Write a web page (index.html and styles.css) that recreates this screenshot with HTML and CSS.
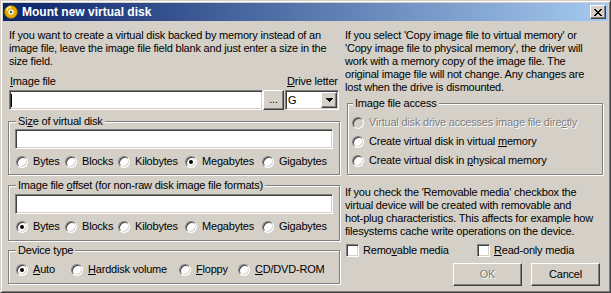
FILE: index.html
```html
<!DOCTYPE html>
<html lang="en">
<head>
<meta charset="utf-8">
<title>Mount new virtual disk</title>
<link rel="stylesheet" href="styles.css">
</head>
<body>
<div class="window">
  <div class="titlebar">
    <svg class="title-icon" viewBox="0 0 16 16" width="16" height="16">
      <circle cx="8" cy="8" r="6.5" fill="#E2AE00" stroke="#7A5C00" stroke-width="1"/>
      <path d="M3.5 6.5 A5 5 0 0 1 8 3" stroke="#FFF2A8" stroke-width="1.6" fill="none"/>
      <circle cx="8" cy="8" r="2.6" fill="#fff"/>
      <circle cx="8" cy="8" r="1.2" fill="#4A4A4A"/>
    </svg>
    <span class="title-text">Mount new virtual disk</span>
    <span class="close-btn">
      <svg viewBox="0 0 8 7" width="8" height="7" shape-rendering="crispEdges">
        <path d="M0 0h2v1H0z M6 0h2v1H6z M1 1h2v1H1z M5 1h2v1H5z M2 2h4v1H2z M3 3h2v1H3z M2 4h4v1H2z M1 5h2v1H1z M5 5h2v1H5z M0 6h2v1H0z M6 6h2v1H6z" fill="#000"/>
      </svg>
    </span>
  </div>

  <div class="dialog">
    <div class="col-left">
      <p class="note note-left">If you want to create a virtual disk backed by memory instead of an<br>image file, leave the image file field blank and just enter a size in the<br>size field.</p>

      <div class="file-labels">
        <span class="file-label"><u>I</u>mage file</span>
        <span class="drive-label"><u>D</u>rive letter</span>
      </div>
      <div class="file-row">
        <span class="edit edit-file"><span class="caret"></span></span>
        <span class="button btn-browse">...</span>
        <span class="combo">
          <span class="combo-value">G</span>
          <span class="button combo-arrow">
            <svg viewBox="0 0 7 4" width="7" height="4" shape-rendering="crispEdges"><path d="M0 0h7v1H0z M1 1h5v1H1z M2 2h3v1H2z M3 3h1v1H3z" fill="#000"/></svg>
          </span>
        </span>
      </div>

      <div class="group group-size">
        <div class="group-title">Si<u>z</u>e of virtual disk</div>
        <div class="edit"></div>
        <div class="choices choices-units">
          <span class="option"><span class="radio"></span>Bytes</span>
          <span class="option"><span class="radio"></span>Blocks</span>
          <span class="option"><span class="radio"></span>Kilobytes</span>
          <span class="option"><span class="radio checked"></span>Megabytes</span>
          <span class="option"><span class="radio"></span>Gigabytes</span>
        </div>
      </div>

      <div class="group group-offset">
        <div class="group-title">Image file <u>o</u>ffset (for non-raw disk image file formats)</div>
        <div class="edit"></div>
        <div class="choices choices-units">
          <span class="option"><span class="radio checked"></span>Bytes</span>
          <span class="option"><span class="radio"></span>Blocks</span>
          <span class="option"><span class="radio"></span>Kilobytes</span>
          <span class="option"><span class="radio"></span>Megabytes</span>
          <span class="option"><span class="radio"></span>Gigabytes</span>
        </div>
      </div>

      <div class="group group-device">
        <div class="group-title">Device type</div>
        <div class="choices choices-device">
          <span class="option"><span class="radio checked"></span><span><u>A</u>uto</span></span>
          <span class="option"><span class="radio"></span><span><u>H</u>arddisk volume</span></span>
          <span class="option"><span class="radio"></span><span><u>F</u>loppy</span></span>
          <span class="option"><span class="radio"></span><span><u>C</u>D/DVD-ROM</span></span>
        </div>
      </div>
    </div>

    <div class="col-right">
      <p class="note">If you select 'Copy image file to virtual memory' or<br>'Copy image file to physical memory', the driver will<br>work with a memory copy of the image file. The<br>original image file will not change. Any changes are<br>lost when the drive is dismounted.</p>

      <div class="group group-access">
        <div class="group-title">Image file access</div>
        <div class="option access-option disabled"><span class="radio"></span><span>Virtual disk drive accesses image file dire<u>c</u>tly</span></div>
        <div class="option access-option"><span class="radio"></span><span>Create virtual disk in virtual <u>m</u>emory</span></div>
        <div class="option access-option"><span class="radio"></span><span>Create virtual disk in <u>p</u>hysical memory</span></div>
      </div>

      <p class="note note-removable">If you check the 'Removable media' checkbox the<br>virtual device will be created with removable and<br>hot-plug characteristics. This affects for example how<br>filesystems cache write operations on the device.</p>

      <div class="checks">
        <span class="option check-removable"><span class="checkbox"></span><span>Remo<u>v</u>able media</span></span>
        <span class="option"><span class="checkbox"></span><span><u>R</u>ead-only media</span></span>
      </div>

      <div class="buttons">
        <span class="button push disabled">OK</span>
        <span class="button push">Cancel</span>
      </div>
    </div>
  </div>
</div>
</body>
</html>
```

FILE: styles.css
```css
body {
    margin: 0;
    font: 11px/13px "Liberation Sans", Arial, sans-serif;
    letter-spacing: -0.2px;
    color: #000;
    background: #fff;
}
u { text-decoration: underline; }

/* window frame */
.window {
    width: 611px;
    height: 293px;
    box-sizing: border-box;
    padding: 2px;
    background: #D4D0C8;
    border: 1px solid;
    border-color: #D4D0C8 #404040 #404040 #D4D0C8;
    box-shadow: inset 1px 1px #fff, inset -1px -1px #808080;
}
.titlebar {
    height: 18px;
    display: flex;
    align-items: center;
    background: linear-gradient(to right, #0A246A, #A6CAF0);
    color: #fff;
}
.title-icon { flex: none; }
.title-text {
    flex: 1;
    margin-left: 3px;
    font-weight: bold;
    font-size: 12px;
    letter-spacing: 0;
}
.close-btn {
    width: 16px;
    height: 14px;
    margin-right: 2px;
    display: flex;
    align-items: center;
    justify-content: center;
    box-sizing: border-box;
    background: #D4D0C8;
    border: 1px solid;
    border-color: #fff #404040 #404040 #fff;
    box-shadow: inset -1px -1px #808080;
}

/* 3d controls */
.button {
    box-sizing: border-box;
    display: flex;
    align-items: center;
    justify-content: center;
    background: #D4D0C8;
    border: 1px solid;
    border-color: #fff #404040 #404040 #fff;
    box-shadow: inset -1px -1px #808080;
}
.edit {
    height: 20px;
    box-sizing: border-box;
    background: #fff;
    border: 1px solid;
    border-color: #808080 #fff #fff #808080;
    box-shadow: inset 1px 1px #404040, inset -1px -1px #D4D0C8;
}
.radio {
    width: 12px;
    height: 12px;
    flex: none;
    box-sizing: border-box;
    display: flex;
    align-items: center;
    justify-content: center;
    border-radius: 50%;
    background: #fff;
    border: 1px solid;
    border-color: #808080 #fff #fff #808080;
    box-shadow: inset 1px 1px #404040, inset -1px -1px #D4D0C8;
}
.radio.checked::after {
    content: "";
    width: 4px;
    height: 4px;
    border-radius: 50%;
    background: #000;
}
.checkbox {
    width: 13px;
    height: 13px;
    flex: none;
    box-sizing: border-box;
    background: #fff;
    border: 1px solid;
    border-color: #808080 #fff #fff #808080;
    box-shadow: inset 1px 1px #404040, inset -1px -1px #D4D0C8;
}
.option {
    display: flex;
    align-items: center;
    gap: 5px;
    height: 13px;
    white-space: nowrap;
}
.disabled { color: #808080; text-shadow: 1px 1px #fff; }
.disabled .radio { background: #D4D0C8; }

/* layout */
.dialog {
    display: flex;
    padding: 8px 0 0 5px;
}
.col-left { width: 333px; }
.col-right { width: 259px; margin-left: 4px; }
.note { margin: 0; white-space: nowrap; }
.note-left { margin-left: 1px; }

.file-labels {
    display: flex;
    margin-top: 7px;
    padding-left: 2px;
}
.file-label { width: 275px; }
.drive-label { margin-left: 2px; }
.file-row {
    display: flex;
    height: 20px;
    margin: 2px 0 0 1px;
}
.edit-file {
    width: 254px;
    display: flex;
    align-items: center;
}
.caret {
    width: 1px;
    height: 13px;
    margin-left: 1px;
    background: #000;
}
.btn-browse {
    width: 21px;
    align-items: flex-end;
    padding-bottom: 3px;
}
.combo {
    width: 54px;
    margin-left: 1px;
    display: flex;
    box-sizing: border-box;
    background: #fff;
    border: 1px solid;
    border-color: #808080 #fff #fff #808080;
    box-shadow: inset 1px 1px #404040, inset -1px -1px #D4D0C8;
    padding: 1px;
}
.combo-value {
    flex: 1;
    padding-left: 1px;
    line-height: 16px;
}
.combo-arrow { width: 16px; height: 16px; }

/* group boxes */
.group {
    margin-right: 1px;
    padding: 0 6px 6px;
    border: 1px solid #808080;
    box-shadow: inset 1px 1px #fff, 1px 1px #fff;
}
.group-title {
    width: fit-content;
    margin: -7px 0 0 1px;
    padding: 0 2px;
    background: #D4D0C8;
}
.group .edit { margin-top: 1px; }
.group-size { margin-top: 11px; }
.group-offset { margin-top: 10px; padding-bottom: 7px; }
.group-offset .edit { margin-top: 2px; }
.group-device { margin-top: 9px; padding-bottom: 7px; }

.choices {
    display: grid;
    margin-top: 6px;
    padding-left: 1px;
}
.choices-units { grid-template-columns: 49px 53px 67px 77px auto; }
.choices-device { grid-template-columns: 55px 108px 59px auto; }

.group-access {
    margin: 9px 1px 0 2px;
    padding: 0 4px 7px;
}
.access-option { margin-top: 6px; }

.note-removable { margin-top: 11px; }
.checks {
    display: flex;
    margin-top: 6px;
    padding-left: 1px;
}
.checks .option { gap: 4px; }
.check-removable { width: 131px; }

.buttons {
    display: flex;
    justify-content: flex-end;
    gap: 9px;
    margin: 6px 4px 0 0;
}
.push { width: 69px; height: 23px; }
```
